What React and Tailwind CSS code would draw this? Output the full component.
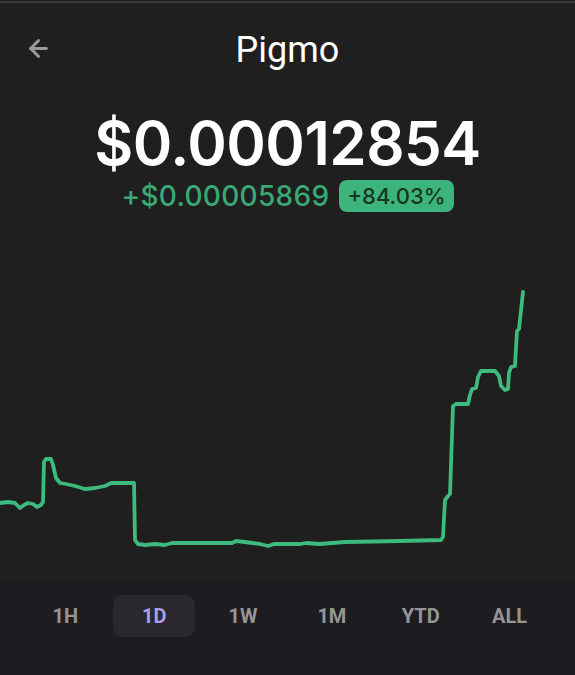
import { ArrowLeft } from "lucide-react";

const RANGES = ["1H", "1D", "1W", "1M", "YTD", "ALL"];

const CHART_POINTS = [
  [0, 503], [8, 502], [15, 503], [20, 508], [24, 505], [28, 503], [33, 504], [37, 507], [41, 505], [43, 502],
  [44, 462], [46, 459], [51, 459], [53, 465], [56, 478], [60, 483], [66, 484], [75, 486], [85, 489], [95, 488],
  [105, 486], [111, 483], [134, 483], [135, 540], [138, 544], [145, 545], [155, 544], [165, 545], [172, 543],
  [232, 543], [236, 541], [245, 542], [260, 544], [268, 546], [274, 544], [300, 544], [306, 543], [320, 544],
  [332, 543], [345, 542], [400, 541], [441, 540], [443, 537], [445, 500], [448, 496], [450, 494], [453, 406],
  [456, 404], [468, 404], [470, 395], [472, 389], [476, 388], [478, 377], [481, 371], [495, 371], [499, 376],
  [501, 386], [505, 390], [508, 389], [509, 373], [511, 367], [515, 366], [516, 348], [517, 331], [519, 329],
  [523, 292],
];

const chartPath = CHART_POINTS.map(([x, y], i) => `${i === 0 ? "M" : "L"}${x} ${y}`).join(" ");

export default function App() {
  return (
    <div className="w-[575px] h-[675px] bg-[#1f1f1f] flex flex-col overflow-hidden" style={{ fontFamily: "Roboto, 'Noto Sans', sans-serif" }}>
      <div className="h-[2px] bg-[#3a3a3a] mt-[1px]" />

      {/* header */}
      <div className="relative pt-[29px] flex justify-center">
        <button className="absolute left-[25px] top-[32px] text-[#9a9a9a]">
          <ArrowLeft className="w-[27px] h-[27px]" strokeWidth={2.6} />
        </button>
        <h1 className="text-[36px] leading-none text-white">Pigmo</h1>
      </div>

      {/* price */}
      <div className="flex flex-col items-center" style={{ fontFamily: "Inter, sans-serif" }}>
        <div className="text-[60px] leading-none font-semibold text-white tracking-[-0.5px] mt-[45px]">$0.00012854</div>
        <div className="flex items-center gap-[10px] mt-[7px]">
          <span className="text-[28px] leading-none font-medium text-[#3aa874] tracking-[0.3px]">+$0.00005869</span>
          <span className="text-[22px] leading-none font-medium text-[#163625] bg-[#3db47b] rounded-[8px] px-[8px] py-[5px]">+84.03%</span>
        </div>
      </div>

      {/* chart */}
      <svg className="block mt-[38px] shrink-0" width="575" height="330" viewBox="0 250 575 330">
        <path d={chartPath} fill="none" stroke="#3dba7e" strokeWidth="3.8" strokeLinejoin="round" strokeLinecap="round" />
      </svg>

      {/* ranges */}
      <div className="flex-1 bg-[#1e1c20] flex items-start px-[21px] pt-[15px]">
        {RANGES.map((r) => (
          <div key={r} className="flex-1 flex justify-center">
            <div
              className={`w-[82px] h-[42px] flex items-center justify-center rounded-[10px] text-[20px] font-bold ${r === "1D" ? "bg-[#2a282c] text-[#a99cf0]" : "text-[#959595]"}`}
            >
              {r}
            </div>
          </div>
        ))}
      </div>
    </div>
  );
}
